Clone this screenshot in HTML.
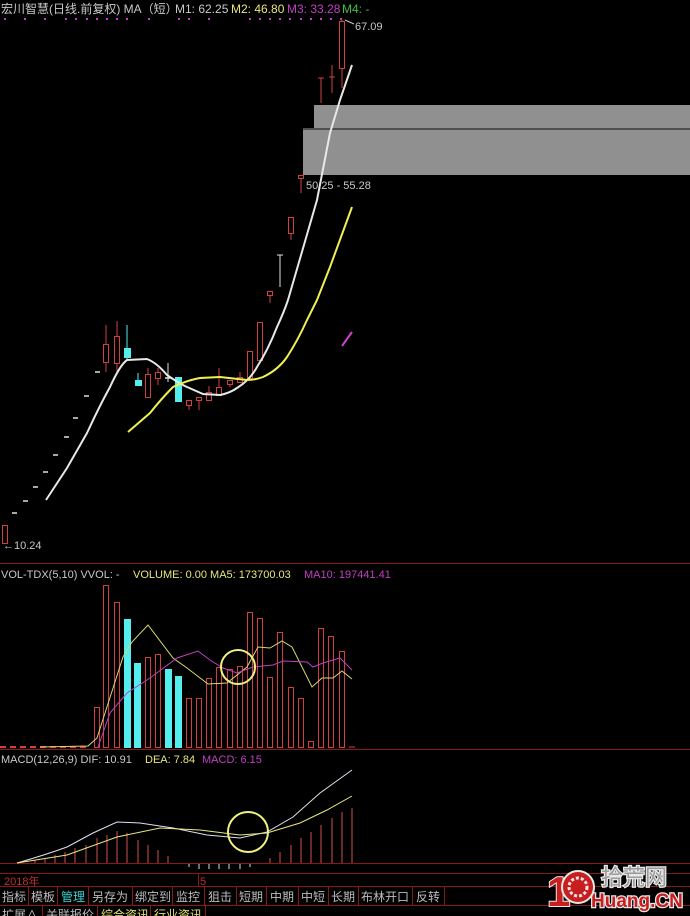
<!DOCTYPE html>
<html><head><meta charset="utf-8"><style>
html,body{margin:0;padding:0;background:#000;}
svg{display:block}
text{font-family:"Liberation Sans","Noto Sans CJK SC",sans-serif;}
</style></head><body>
<svg width="690" height="916" viewBox="0 0 690 916" xmlns="http://www.w3.org/2000/svg">
<rect width="690" height="916" fill="#000"/>
<text x="1" y="13" font-size="12" fill="#c8c8c8">宏川智慧(日线.前复权) MA（短）</text>
<text x="175" y="13" font-size="12" fill="#c8c8c8">M1: 62.25</text>
<text x="231" y="13" font-size="12" fill="#e6e67a">M2: 46.80</text>
<text x="287" y="13" font-size="12" fill="#c040c0">M3: 33.28</text>
<text x="342" y="13" font-size="12" fill="#40c040">M4: -</text>
<g fill="#c040c0">
<rect x="4" y="18" width="2" height="2"/><rect x="24" y="18" width="2" height="2"/><rect x="44" y="18" width="2" height="2"/>
<rect x="65" y="18" width="2" height="2"/><rect x="75" y="18" width="2" height="2"/><rect x="86" y="18" width="2" height="2"/><rect x="96" y="18" width="2" height="2"/><rect x="106" y="18" width="2" height="2"/><rect x="116" y="18" width="2" height="2"/><rect x="126" y="18" width="2" height="2"/>
<rect x="148" y="18" width="2" height="2"/><rect x="178" y="18" width="2" height="2"/><rect x="188" y="18" width="2" height="2"/><rect x="208" y="18" width="2" height="2"/>
<rect x="249" y="18" width="2" height="2"/><rect x="259" y="18" width="2" height="2"/><rect x="269" y="18" width="2" height="2"/><rect x="279" y="18" width="2" height="2"/><rect x="289" y="18" width="2" height="2"/><rect x="300" y="18" width="2" height="2"/><rect x="310" y="18" width="2" height="2"/><rect x="320" y="18" width="2" height="2"/><rect x="330" y="18" width="2" height="2"/><rect x="340" y="18" width="2" height="2"/>
</g>
<rect x="314" y="105" width="376" height="23" fill="#909090"/>
<rect x="303" y="128" width="387" height="2" fill="#505050"/>
<rect x="303" y="130" width="387" height="45" fill="#909090"/>
<text x="306" y="189" font-size="11" fill="#c8c8c8">50.25 - 55.28</text>
<text x="355" y="30" font-size="11" fill="#c8c8c8">67.09</text>
<path d="M345 20 L354 24" stroke="#c8c8c8" fill="none"/>
<text x="3" y="549" font-size="11" fill="#c8c8c8">←10.24</text>
<g stroke="#d04040" fill="none" stroke-width="1">
<rect x="2.5" y="525.5" width="5" height="18"/>
<line x1="106" y1="325" x2="106" y2="372"/><rect x="103.5" y="344.5" width="5" height="18" fill="#000"/>
<line x1="117" y1="321" x2="117" y2="372"/><rect x="114.5" y="336.5" width="5" height="27" fill="#000"/>
<line x1="148" y1="368" x2="148" y2="397"/><rect x="145.5" y="374.5" width="5" height="23" fill="#000"/>
<line x1="158" y1="368" x2="158" y2="385"/><rect x="155.5" y="372.5" width="5" height="6" fill="#000"/>
<line x1="189" y1="400" x2="189" y2="410"/><rect x="186.5" y="400.5" width="5" height="5" fill="#000"/>
<line x1="199" y1="397" x2="199" y2="410"/><rect x="196.5" y="397.5" width="5" height="3" fill="#000"/>
<line x1="209" y1="386" x2="209" y2="400"/><rect x="206.5" y="392.5" width="5" height="8" fill="#000"/>
<line x1="219" y1="368" x2="219" y2="395"/><rect x="216.5" y="387.5" width="5" height="8" fill="#000"/>
<line x1="230" y1="380" x2="230" y2="387"/><rect x="227.5" y="380.5" width="5" height="4" fill="#000"/>
<line x1="240" y1="372" x2="240" y2="382"/><rect x="237.5" y="377.5" width="5" height="5" fill="#000"/>
<rect x="247.5" y="351.5" width="5" height="27" fill="#000"/>
<rect x="257.5" y="322.5" width="5" height="38" fill="#000"/>
<line x1="270" y1="291" x2="270" y2="303"/><rect x="267.5" y="291.5" width="5" height="4" fill="#000"/>
<line x1="291" y1="217" x2="291" y2="240"/><rect x="288.5" y="217.5" width="5" height="16" fill="#000"/>
<line x1="301" y1="175" x2="301" y2="193"/><rect x="298.5" y="175.5" width="5" height="3" fill="#000"/>
<line x1="321" y1="78" x2="321" y2="103"/><line x1="318" y1="78" x2="324" y2="78"/>
<line x1="332" y1="65" x2="332" y2="93"/><line x1="329" y1="77" x2="335" y2="77"/>
<line x1="342" y1="20" x2="342" y2="88"/><rect x="339.5" y="21.5" width="5" height="47" fill="#000"/>
</g>
<g fill="#55eeee" stroke="none">
<line x1="127" y1="325" x2="127" y2="361" stroke="#55eeee"/><rect x="124" y="348" width="7" height="10"/>
<line x1="138" y1="373" x2="138" y2="382" stroke="#55eeee"/><rect x="135" y="380" width="7" height="6"/>
<rect x="175" y="377" width="7" height="25"/>
</g>
<g stroke="#e0e0e0" stroke-width="1.5">
<line x1="12" y1="513" x2="17" y2="513"/><line x1="23" y1="501" x2="28" y2="501"/><line x1="33" y1="487" x2="38" y2="487"/><line x1="43" y1="472" x2="48" y2="472"/><line x1="53" y1="455" x2="58" y2="455"/><line x1="64" y1="437" x2="69" y2="437"/><line x1="73" y1="418" x2="78" y2="418"/><line x1="84" y1="396" x2="89" y2="396"/><line x1="95" y1="372" x2="100" y2="372"/>
<line x1="168" y1="363" x2="168" y2="382" stroke-width="1"/><line x1="165" y1="378" x2="171" y2="378"/>
<line x1="280" y1="255" x2="280" y2="287" stroke-width="1"/><line x1="277" y1="255" x2="283" y2="255" stroke-width="1"/>
</g>
<path d="M46 500 L67 468 L87 433 Q100 405 110 387 Q120 365 127 360 L147 359 Q157 363 167 375 Q180 384 187 387 L203 394 L220 395 Q230 393 237 388 Q250 380 257 367 Q268 350 277 327 Q284 312 288 300 L317 200 L330 133 L340 100 L352 65" fill="none" stroke="#e8e8e8" stroke-width="2"/>
<path d="M128 432 L150 413 Q162 398 173 387 Q188 380 200 378 L220 377 L247 380 Q255 380 263 377 Q278 370 287 357 Q298 340 307 320 L317 300 L330 267 L352 207" fill="none" stroke="#f0f050" stroke-width="2"/>
<line x1="342" y1="346" x2="352" y2="332" stroke="#d040d0" stroke-width="2"/>
<line x1="0" y1="563.5" x2="690" y2="563.5" stroke="#8a1a1a"/>
<line x1="0" y1="749.5" x2="690" y2="749.5" stroke="#8a1a1a"/>
<text x="1" y="578" font-size="11" fill="#c8c8c8">VOL-TDX(5,10)  VVOL: -</text>
<text x="133" y="578" font-size="11" fill="#e6e67a">VOLUME: 0.00  MA5: 173700.03</text>
<text x="304" y="578" font-size="11" fill="#c040c0">MA10: 197441.41</text>
<line x1="0" y1="747" x2="88" y2="747" stroke="#d04040" stroke-width="2" stroke-dasharray="6,4"/>
<g stroke="#d04040" fill="none">
<rect x="94.5" y="707.5" width="5" height="40"/>
<rect x="103.5" y="585.5" width="5" height="162"/>
<rect x="114.5" y="602.5" width="5" height="145"/>
<rect x="145.5" y="657.5" width="5" height="90"/>
<rect x="155.5" y="654.5" width="5" height="93"/>
<rect x="186.5" y="698.5" width="5" height="49"/>
<rect x="196.5" y="698.5" width="5" height="49"/>
<rect x="206.5" y="678.5" width="5" height="69"/>
<rect x="216.5" y="667.5" width="5" height="80"/>
<rect x="227.5" y="669.5" width="5" height="78"/>
<rect x="237.5" y="666.5" width="5" height="81"/>
<rect x="247.5" y="612.5" width="5" height="135"/>
<rect x="257.5" y="618.5" width="5" height="129"/>
<rect x="267.5" y="677.5" width="5" height="70"/>
<rect x="277.5" y="632.5" width="5" height="115"/>
<rect x="288.5" y="687.5" width="5" height="60"/>
<rect x="298.5" y="698.5" width="5" height="49"/>
<rect x="308.5" y="741.5" width="5" height="6"/>
<rect x="318.5" y="628.5" width="5" height="119"/>
<rect x="328.5" y="636.5" width="5" height="111"/>
<rect x="339.5" y="651.5" width="5" height="96"/>
<line x1="349" y1="747" x2="355" y2="747"/>
</g>
<g fill="#55eeee">
<rect x="124" y="619" width="7" height="129"/>
<rect x="134" y="663" width="7" height="85"/>
<rect x="165" y="669" width="7" height="79"/>
<rect x="175" y="676" width="7" height="72"/>
</g>
<path d="M40 747 L88 746 L97 738 L123 657 L132 642 L148 625 L173 658 L187 668 L208 684 L227 683 L247 667 L258 647 L270 648 L282 641 L292 647 L312 687 L322 678 L333 678 L342 671 L352 679" fill="none" stroke="#d8d870" stroke-width="1"/>
<path d="M98 747 L110 713 L127 693 L150 678 L177 658 L198 651 L210 660 L223 668 L237 673 L253 667 L273 665 L283 661 L307 662 L313 667 L323 663 L340 658 L352 670" fill="none" stroke="#c040c0" stroke-width="1"/>
<circle cx="238" cy="667" r="17" fill="none" stroke="#f0f080" stroke-width="2"/>
<text x="1" y="763" font-size="11" fill="#c8c8c8">MACD(12,26,9)  DIF: 10.91</text>
<text x="145" y="763" font-size="11" fill="#e6e67a">DEA: 7.84</text>
<text x="202" y="763" font-size="11" fill="#c040c0">MACD: 6.15</text>
<g stroke="#d05050">
<line x1="35" y1="863" x2="35" y2="860"/><line x1="45" y1="863" x2="45" y2="858"/><line x1="55" y1="863" x2="55" y2="855"/><line x1="65" y1="863" x2="65" y2="852"/><line x1="75" y1="863" x2="75" y2="848"/><line x1="86" y1="863" x2="86" y2="845"/><line x1="97" y1="863" x2="97" y2="838"/><line x1="107" y1="863" x2="107" y2="835"/><line x1="117" y1="863" x2="117" y2="831"/><line x1="127" y1="863" x2="127" y2="833"/><line x1="138" y1="863" x2="138" y2="840"/><line x1="148" y1="863" x2="148" y2="845"/><line x1="158" y1="863" x2="158" y2="850"/><line x1="168" y1="863" x2="168" y2="856"/>
<line x1="270" y1="863" x2="270" y2="858"/><line x1="280" y1="863" x2="280" y2="852"/><line x1="291" y1="863" x2="291" y2="845"/><line x1="301" y1="863" x2="301" y2="838"/><line x1="311" y1="863" x2="311" y2="832"/><line x1="321" y1="863" x2="321" y2="825"/><line x1="332" y1="863" x2="332" y2="818"/><line x1="342" y1="863" x2="342" y2="812"/><line x1="352" y1="863" x2="352" y2="808"/>
</g>
<g stroke="#c8e8e8">
<line x1="189" y1="864" x2="189" y2="867"/><line x1="199" y1="864" x2="199" y2="869"/><line x1="209" y1="864" x2="209" y2="869"/><line x1="219" y1="864" x2="219" y2="869"/><line x1="229" y1="864" x2="229" y2="869"/><line x1="240" y1="864" x2="240" y2="869"/><line x1="250" y1="864" x2="250" y2="867"/>
</g>
<line x1="0" y1="863.5" x2="690" y2="863.5" stroke="#8a1a1a"/>
<path d="M17 863 Q45 855 67 847 L93 833 L117 822 L140 823 L173 828 L207 835 L240 838 L267 832 L293 817 L320 793 L352 770" fill="none" stroke="#e0e0f0" stroke-width="1"/>
<path d="M17 863 L67 855 L117 837 L160 828 L200 830 L240 835 L267 833 L300 823 L327 810 L352 796" fill="none" stroke="#e8e880" stroke-width="1"/>
<circle cx="248" cy="832" r="20" fill="none" stroke="#f0f080" stroke-width="2"/>
<line x1="0" y1="873.5" x2="690" y2="873.5" stroke="#8a1a1a"/>
<line x1="198.5" y1="873" x2="198.5" y2="886" stroke="#8a1a1a"/>
<text x="4" y="885" font-size="11" fill="#c03030">2018年</text>
<text x="200" y="885" font-size="11" fill="#c03030">5</text>
<line x1="0" y1="886.5" x2="690" y2="886.5" stroke="#8a1a1a"/>
<line x1="0" y1="905.5" x2="690" y2="905.5" stroke="#8a1a1a"/>
<g stroke="#8a1a1a">
<line x1="28.5" y1="886" x2="28.5" y2="905"/><line x1="57.5" y1="886" x2="57.5" y2="905"/><line x1="88.5" y1="886" x2="88.5" y2="905"/><line x1="132.5" y1="886" x2="132.5" y2="905"/><line x1="172.5" y1="886" x2="172.5" y2="905"/><line x1="204.5" y1="886" x2="204.5" y2="905"/><line x1="236.5" y1="886" x2="236.5" y2="905"/><line x1="266.5" y1="886" x2="266.5" y2="905"/><line x1="298.5" y1="886" x2="298.5" y2="905"/><line x1="328.5" y1="886" x2="328.5" y2="905"/><line x1="358.5" y1="886" x2="358.5" y2="905"/><line x1="412.5" y1="886" x2="412.5" y2="905"/><line x1="444.5" y1="886" x2="444.5" y2="905"/>
<line x1="42.5" y1="905" x2="42.5" y2="916"/><line x1="97.5" y1="905" x2="97.5" y2="916"/><line x1="150.5" y1="905" x2="150.5" y2="916"/><line x1="205.5" y1="905" x2="205.5" y2="916"/>
</g>
<g font-size="12" fill="#bcbcbc">
<text x="2" y="901">指标</text><text x="31" y="901">模板</text><text x="61" y="901" fill="#40d0d0">管理</text><text x="92" y="901">另存为</text><text x="135" y="901">绑定到</text><text x="176" y="901">监控</text><text x="208" y="901">狙击</text><text x="239" y="901">短期</text><text x="270" y="901">中期</text><text x="301" y="901">中短</text><text x="331" y="901">长期</text><text x="361" y="901">布林开口</text><text x="416" y="901">反转</text>
<text x="2" y="919">扩展∧</text><text x="46" y="919">关联报价</text><text x="101" y="919" fill="#e0e070">综合资讯</text><text x="154" y="919" fill="#e0e070">行业资讯</text>
</g>
<g>
<text x="601" y="885" font-size="22" fill="#9a9a9a" stroke="#e8e8e8" stroke-width="2.5" paint-order="stroke">拾荒网</text>
<text x="591" y="907" font-size="19" font-weight="bold" fill="#c81e1e" stroke="#e8e8e8" stroke-width="2.5" paint-order="stroke">Huang.CN</text>
<text x="547" y="906" font-size="42" font-weight="bold" fill="#c81e1e" stroke="#e8e8e8" stroke-width="2" paint-order="stroke">1</text>
<circle cx="578" cy="887" r="16" fill="#c81e1e" stroke="#e8e8e8" stroke-width="2"/>
<circle cx="578" cy="887" r="9" fill="none" stroke="#e8e8e8" stroke-width="3" stroke-dasharray="3,2"/>
<circle cx="578" cy="887" r="3" fill="#c81e1e"/>
</g>
</svg>
</body></html>
